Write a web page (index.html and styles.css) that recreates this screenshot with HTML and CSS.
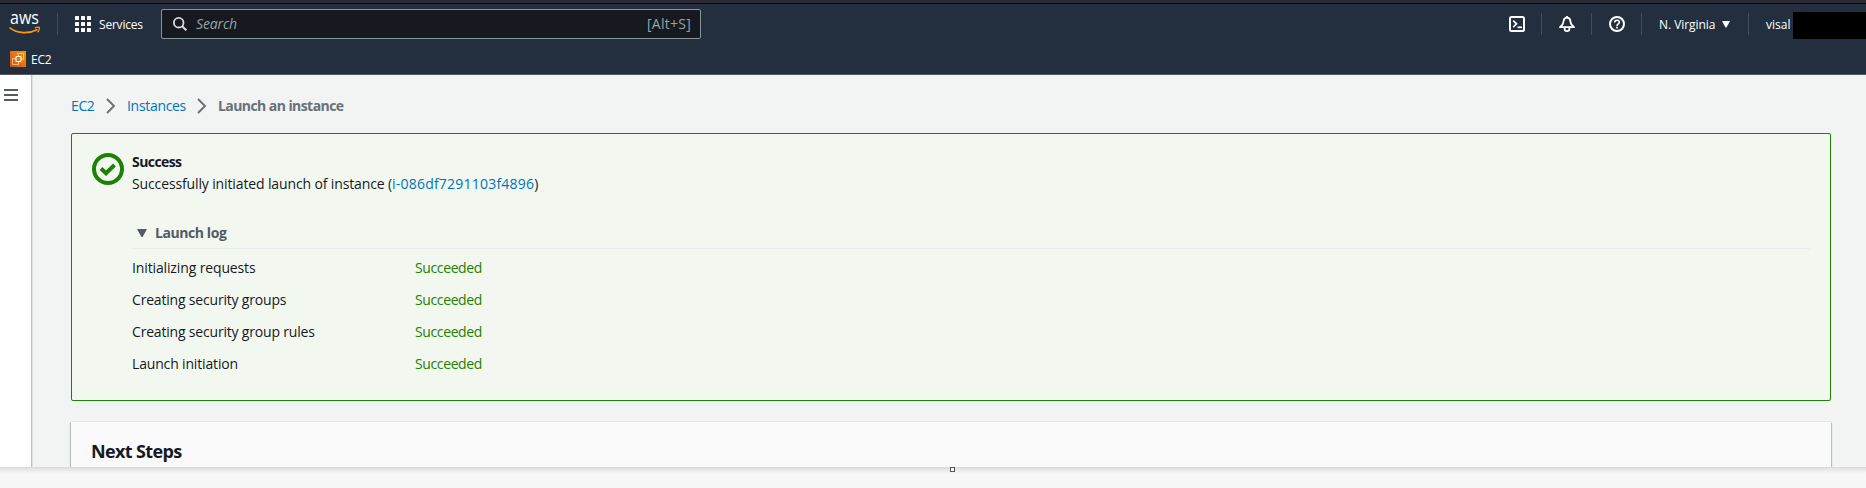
FILE: index.html
```html
<!DOCTYPE html>
<html lang="en">
<head>
<meta charset="utf-8">
<title>Launch an instance | EC2</title>
<link rel="stylesheet" href="styles.css">
</head>
<body>
<header class="header">
  <nav class="nav">
    <svg class="logo" width="32" height="24" viewBox="0 0 32 24">
      <text class="logo-text" x="1" y="12.400" textLength="29" lengthAdjust="spacingAndGlyphs">aws</text>
      <path d="M.5 15.600C8.500 21.800 20 22 28.600 17.400" fill="none" stroke="#f90" stroke-width="1.700"/>
      <path d="M25.800 15.900c1.600-.7 3.600-.9 4.400-.5.5 1-.3 3.600-1.700 5" fill="none" stroke="#f90" stroke-width="1.300"/>
    </svg>
    <span class="divider divider-logo"></span>
    <div class="services">
      <svg width="16" height="16" viewBox="0 0 16 16" fill="#fff">
        <rect width="4" height="4" rx=".6"/><rect x="6" width="4" height="4" rx=".6"/><rect x="12" width="4" height="4" rx=".6"/>
        <rect y="6" width="4" height="4" rx=".6"/><rect x="6" y="6" width="4" height="4" rx=".6"/><rect x="12" y="6" width="4" height="4" rx=".6"/>
        <rect y="12" width="4" height="4" rx=".6"/><rect x="6" y="12" width="4" height="4" rx=".6"/><rect x="12" y="12" width="4" height="4" rx=".6"/>
      </svg>
      <span class="services-label">Services</span>
    </div>
    <div class="search">
      <svg width="14" height="14" viewBox="0 0 14 14" fill="none" stroke="#d5dbdb" stroke-width="1.8">
        <circle cx="5.7" cy="5.7" r="4.8"/><path d="M9.2 9.2l4.2 4.2" stroke-width="2"/>
      </svg>
      <span class="search-label">Search</span>
      <span class="search-key">[Alt+S]</span>
    </div>
    <div class="tools">
      <svg width="16" height="16" viewBox="0 0 16 16" fill="none" stroke="#fff" stroke-width="2">
        <rect x="1" y="1" width="14" height="14" rx="1.5"/><path d="M4.2 4.6l3.3 3.2-3.3 3.3" stroke-width="1.7"/><path d="M8.5 11.3H13" stroke-width="1.7"/>
      </svg>
      <span class="divider"></span>
      <svg width="16" height="16" viewBox="0 0 16 16" fill="none" stroke="#fff" stroke-width="1.8" stroke-linejoin="round">
        <path d="M8 1.6C5.700 1.700 4.700 3.200 4.600 5.200 4.500 7.500 3.600 9 1 11.200h14C12.400 9 11.500 7.500 11.400 5.200 11.300 3.200 10.300 1.700 8 1.600z"/>
        <path d="M8 0v2"/><path d="M5.600 11.500v1.200c0 1.500 1 2.400 2.400 2.400s2.400-.9 2.400-2.400v-1.200"/>
      </svg>
      <span class="divider"></span>
      <svg width="16" height="16" viewBox="0 0 16 16" fill="none" stroke="#fff" stroke-width="2">
        <circle cx="8" cy="8" r="7"/><path d="M5.600 6.600C5.600 5 6.600 4.200 8 4.200s2.400.8 2.400 2.100C10.400 7.800 8 7.900 8 9.900" stroke-width="1.600"/><path d="M8 10.800v1.700" stroke-width="1.700"/>
      </svg>
      <span class="divider"></span>
      <div class="region">
        <span>N. Virginia</span>
        <svg width="8" height="7" viewBox="0 0 8 7"><path d="M0 0h8L4.500 6.500h-1z" fill="#fff"/></svg>
      </div>
      <span class="divider"></span>
      <span class="user">visal</span>
      <span class="mask"></span>
    </div>
  </nav>
  <div class="favorites">
    <svg width="16" height="16" viewBox="0 0 16 16">
      <defs><linearGradient id="ec2" x1="0" y1="1" x2="1" y2="0"><stop offset="0" stop-color="#c8511b"/><stop offset="1" stop-color="#f90"/></linearGradient></defs>
      <rect width="16" height="16" fill="url(#ec2)"/>
      <g fill="none" stroke="#fff"><rect x="6" y="5.500" width="5" height="5" rx=".8" stroke-width="1.100"/>
      <path d="M4.500 7.500h-2v6h6v-2M7.500 3.500v-1h6v6h-1" stroke-width=".7" opacity=".75"/>
      <path d="M8.500 4v1.500M8.500 10.500V12M11 8h1.500M4.500 8H6" stroke-width=".7"/></g>
    </svg>
    <span class="favorite-label">EC2</span>
  </div>
</header>
<div class="layout">
  <aside class="side"><svg width="14" height="12" viewBox="0 0 14 12" fill="#545b64"><rect width="14" height="2"/><rect y="5" width="14" height="2"/><rect y="10" width="14" height="2"/></svg></aside>
  <main class="main">
    <nav class="breadcrumb">
      <a class="crumb-ec2">EC2</a>
      <svg width="10" height="16" viewBox="0 0 10 16" fill="none" stroke="#687078" stroke-width="1.900"><path d="M1 1l7 7-7 7"/></svg>
      <a class="crumb-instances">Instances</a>
      <svg width="10" height="16" viewBox="0 0 10 16" fill="none" stroke="#687078" stroke-width="1.900"><path d="M1 1l7 7-7 7"/></svg>
      <span class="crumb-current">Launch an instance</span>
    </nav>
    <section class="alert">
      <svg class="alert-icon" width="32" height="32" viewBox="0 0 32 32" fill="none" stroke="#1d8102" stroke-width="4"><circle cx="16" cy="16" r="14"/><path d="M9 15.500l5 4.700 8.500-8.200"/></svg>
      <div class="alert-body">
        <div class="alert-title">Success</div>
        <div class="alert-text"><span class="message">Successfully initiated launch of instance (</span><a class="instance-id">i-086df7291103f4896</a>)</div>
        <div class="log-head">
          <svg width="10" height="8" viewBox="0 0 10 8"><path d="M0 0h10L5.600 8H4.400z" fill="#545b64"/></svg>
          <span>Launch log</span>
        </div>
        <div class="log">
          <span class="log-initializing">Initializing requests</span><span class="status">Succeeded</span>
          <span class="log-group">Creating security groups</span><span class="status">Succeeded</span>
          <span class="log-group">Creating security group rules</span><span class="status">Succeeded</span>
          <span class="log-launch">Launch initiation</span><span class="status">Succeeded</span>
        </div>
      </div>
    </section>
    <section class="card"><h2 class="card-title">Next Steps</h2></section>
  </main>
</div>
<footer class="footer"><span class="handle"></span></footer>
</body>
</html>
```
FILE: styles.css
```css
* { box-sizing: border-box; }
body {
  margin: 0;
  height: 488px;
  display: flex;
  flex-direction: column;
  overflow: hidden;
  font: 14px/22px "Open Sans", "Noto Sans", sans-serif;
  color: #16191f;
  background: #f2f3f3;
}
svg { display: block; flex: none; }
a { color: #0073bb; }

.header {
  height: 75px;
  flex: none;
  border-top: 3px solid #2b2a33;
  border-bottom: 1px solid #545b64;
  background: #232f3e;
  color: #fff;
  font-size: 12px;
  line-height: 20px;
  box-shadow: inset 0 1px #0c0c0d;
}
.nav { height: 42px; display: flex; align-items: center; }
.logo { margin-left: 9px; overflow: visible; }
.logo-text { font-size: 18px; font-weight: 500; fill: #fff; }
.divider { width: 1px; height: 22px; background: #414d5c; flex: none; }
.divider-logo { margin-left: 16px; }
.services { display: flex; align-items: center; gap: 8px; margin-left: 17px; width: 86px; font-weight: 500; }
.services-label { padding-top: 2px; letter-spacing: -.2px; }
.search {
  width: 540px;
  height: 30px;
  display: flex;
  align-items: center;
  padding: 0 9px 0 11px;
  border: 1px solid #879596;
  border-radius: 2px;
  background: #16191f;
  color: #95a5a6;
  font-size: 14px;
}
.search-label { margin-left: 9px; font-style: italic; letter-spacing: -.14px; }
.search-key { margin-left: auto; letter-spacing: .25px; }
.tools { display: flex; align-items: center; margin-left: auto; }
.tools > .divider { margin: 0 17px 0 16px; }
.region { display: flex; align-items: center; width: 73px; gap: 6px; }
.region span { width: 57px; white-space: nowrap; letter-spacing: -.05px; }
.region + .divider { margin-right: 17px; }
.user { width: 27px; }
.mask { width: 73px; height: 27px; margin-top: 3px; background: #000; }
.region span, .user { padding-top: 2px; font-weight: 500; }
.favorites { display: flex; align-items: center; gap: 5px; height: 28px; padding-left: 10px; }
.favorite-label { padding-top: 2px; font-weight: 500; letter-spacing: -.25px; }

.layout { display: flex; height: 392px; flex: none; overflow: hidden; }
.side { width: 32px; padding: 14px 0 0 4px; background: #fff; border-right: 1px solid #bec4c4; box-shadow: 1px 0 1px #0001; }
.main { width: 1799px; padding: 20px 0 0 39px; }
.breadcrumb { display: flex; align-items: center; height: 22px; }
.crumb-ec2 { width: 35px; letter-spacing: -.37px; }
.crumb-instances { width: 70px; margin-left: 11px; letter-spacing: -.31px; }
.crumb-current { margin-left: 11px; color: #687078; font-weight: 700; letter-spacing: -.57px; }

.alert {
  height: 268px;
  display: flex;
  gap: 8px;
  margin-top: 16px;
  padding: 17px 20px 0;
  border: 1px solid #1d8102;
  border-radius: 2px;
  background: #f2f8f0;
}
.alert-icon { margin-top: 2px; }
.alert-body { flex: 1; }
.alert-title { font-weight: 700; letter-spacing: -.57px; }
.message { letter-spacing: -.13px; }
.instance-id { letter-spacing: .22px; }
.log-head {
  display: flex;
  align-items: center;
  gap: 8px;
  height: 32px;
  margin-top: 22px;
  padding: 0 0 0 5px;
  border-bottom: 1px solid #eaeded;
  color: #545b64;
  font-weight: 700;
  letter-spacing: -.42px;
}
.log { display: grid; grid-template-columns: 283px 1fr; line-height: 32px; padding-top: 3px; }
.log-initializing { letter-spacing: -.13px; }
.log-group { letter-spacing: -.19px; }
.log-launch { letter-spacing: -.16px; }
.status { color: #1d8102; letter-spacing: -.38px; }

.card {
  height: 80px;
  margin-top: 21px;
  padding: 18px 20px;
  background: #fafafa;
  box-shadow: 0 0 1px #001c244d, 1px 1px 1px #001c2433, -1px 1px 1px #001c2433;
}
.card-title { margin: 0; font-size: 18px; line-height: 22px; letter-spacing: -.63px; }
.footer {
  height: 21px;
  display: flex;
  padding-left: 950px;
  background: linear-gradient(#dadada, #e8e8e8 3px, #f7f7f7 6px);
}
.handle { width: 5px; height: 5px; border: 1px solid #555; background: #fff; }
```
